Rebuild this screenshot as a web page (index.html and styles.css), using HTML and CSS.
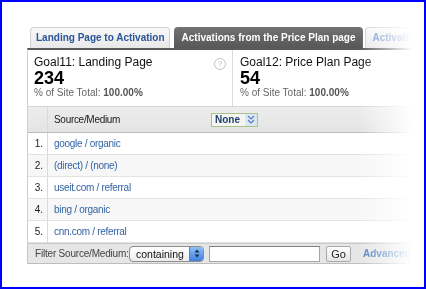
FILE: index.html
```html
<!DOCTYPE html>
<html>
<head>
<meta charset="utf-8">
<link rel="stylesheet" href="styles.css">
</head>
<body>
<div class="frame">
  <div class="widget">
    <div class="tabs">
      <div class="tab tab-light tab-first">Landing Page to Activation</div>
      <div class="tab tab-active">Activations from the Price Plan page</div>
      <div class="tab tab-light tab-third">Activations</div>
    </div>
    <div class="panel">
      <div class="goals">
        <div class="goal goal-first">
          <div class="goal-text">
            <div class="goal-name">Goal11: Landing Page</div>
            <div class="goal-value">234</div>
            <div class="goal-total">% of Site Total: <b>100.00%</b></div>
          </div>
          <span class="help">?</span>
        </div>
        <div class="goal goal-second">
          <div class="goal-text">
            <div class="goal-name">Goal12: Price Plan Page</div>
            <div class="goal-value">54</div>
            <div class="goal-total">% of Site Total: <b>100.00%</b></div>
          </div>
        </div>
      </div>
      <div class="table">
        <div class="row head">
          <div class="num"></div>
          <div class="cell dim">
            <span>Source/Medium</span>
            <span class="secondary">
              <span class="secondary-label">None</span>
              <span class="secondary-btn">
                <svg width="8" height="9" viewBox="0 0 8 9"><polyline points="1,1 4,4 7,1" fill="none" stroke="#4f7fc4" stroke-width="1.2"/><polyline points="1,5 4,8 7,5" fill="none" stroke="#4f7fc4" stroke-width="1.2"/></svg>
              </span>
            </span>
          </div>
        </div>
        <div class="row"><div class="num">1.</div><div class="cell"><span class="link">google / organic</span></div></div>
        <div class="row alt"><div class="num">2.</div><div class="cell"><span class="link">(direct) / (none)</span></div></div>
        <div class="row"><div class="num">3.</div><div class="cell"><span class="link">useit.com / referral</span></div></div>
        <div class="row alt"><div class="num">4.</div><div class="cell"><span class="link">bing / organic</span></div></div>
        <div class="row"><div class="num">5.</div><div class="cell"><span class="link">cnn.com / referral</span></div></div>
      </div>
      <div class="filter">
        <span class="filter-label">Filter Source/Medium:</span>
        <span class="select">
          <span class="select-text">containing</span>
          <span class="stepper">
            <svg width="6" height="9" viewBox="0 0 6 9"><polygon points="3,0.5 5.5,3.5 0.5,3.5" fill="#1c2c48"/><polygon points="3,8.5 5.5,5.5 0.5,5.5" fill="#1c2c48"/></svg>
          </span>
        </span>
        <span class="input"></span>
        <span class="go">Go</span>
        <span class="advanced">Advanced Filter</span>
      </div>
    </div>
  </div>
</div>
</body>
</html>
```

FILE: styles.css
```css
html, body {
  margin: 0;
  padding: 0;
  background: #fff;
}

.frame {
  width: 426px;
  height: 289px;
  box-sizing: border-box;
  border: 2px solid #0000ff;
  padding: 25px 0 0 25px;
  overflow: hidden;
  background: #fff;
  font-family: "Liberation Sans", Arial, sans-serif;
}

.widget {
  width: 420px;
  -webkit-mask-image: linear-gradient(to right, #000 0, #000 333px, rgba(0,0,0,0) 385px);
  mask-image: linear-gradient(to right, #000 0, #000 333px, rgba(0,0,0,0) 385px);
}

.tabs {
  display: flex;
  align-items: flex-end;
  margin-left: 3px;
  height: 21px;
}

.tab {
  height: 21px;
  box-sizing: border-box;
  line-height: 20px;
  padding: 0 6px;
  font-size: 10px;
  font-weight: bold;
  border-radius: 4px 4px 0 0;
  white-space: nowrap;
}

.tab-light {
  background: linear-gradient(#f8f8f8, #e8e8e8);
  border: 1px solid #d2d2d2;
  border-bottom: none;
  color: #2b5597;
}

.tab-first {
  padding: 0 4px 0 5px;
}

.tab-active {
  background: linear-gradient(#727272, #575757);
  color: #fff;
  margin-left: 4px;
  padding: 0 8px;
  line-height: 21px;
}

.tab-third {
  margin-left: 2px;
  color: #6a93cc;
}

.panel {
  border-top: 2px solid #5b5b5b;
  border-left: 1px solid #cfcfcf;
}

.goals {
  display: flex;
  height: 56px;
}

.goal {
  box-sizing: border-box;
  padding-top: 6px;
  color: #111;
}

.goal-first {
  width: 205px;
  border-right: 1px solid #dcdcdc;
  padding-left: 6px;
  padding-right: 6px;
  display: flex;
  justify-content: space-between;
  align-items: flex-start;
}

.goal-second {
  flex: 1;
  padding-left: 7px;
}

.goal-name {
  font-size: 12px;
  line-height: 13px;
}

.goal-value {
  font-size: 18px;
  font-weight: bold;
  line-height: 18px;
  color: #000;
}

.goal-total {
  font-size: 10px;
  line-height: 12px;
  color: #666;
}

.goal-total b {
  color: #555;
}

.help {
  width: 10px;
  height: 10px;
  border: 1px solid #c4c4c4;
  border-radius: 50%;
  font-size: 8px;
  line-height: 10px;
  text-align: center;
  color: #b0b0b0;
  margin-top: 2px;
}

.row {
  display: flex;
  height: 22px;
  box-sizing: border-box;
  border-bottom: 1px solid #e3e3e3;
  font-size: 10px;
  letter-spacing: -0.3px;
  align-items: stretch;
}

.row.alt {
  background: #f7f7f7;
}

.row.head {
  height: 27px;
  border-top: 1px solid #d6d6d6;
  border-bottom: 1px solid #bcbcbc;
  background: linear-gradient(#ededed, #e4e4e4);
  color: #222;
}

.num {
  width: 20px;
  box-sizing: border-box;
  border-right: 1px solid #dadada;
  padding-right: 4px;
  text-align: right;
  color: #222;
  display: flex;
  align-items: center;
  justify-content: flex-end;
  letter-spacing: 0;
}

.cell {
  display: flex;
  align-items: center;
  padding-left: 6px;
}

.cell.dim {
  width: 217px;
  box-sizing: border-box;
  justify-content: space-between;
  padding-right: 7px;
}

.link {
  color: #3464a6;
}

.secondary {
  display: flex;
  height: 14px;
  width: 47px;
  box-sizing: border-box;
  border: 1px solid #a9c18c;
  background: #f4f7f1;
  letter-spacing: 0;
}

.secondary-label {
  flex: 1;
  font-weight: bold;
  font-size: 10px;
  line-height: 12px;
  padding-left: 3px;
  color: #223f6e;
}

.secondary-btn {
  width: 12px;
  background: #dbe7f4;
  display: flex;
  align-items: center;
  justify-content: center;
}

.filter {
  display: flex;
  align-items: center;
  height: 21px;
  box-sizing: border-box;
  border-top: 1px solid #cacaca;
  border-bottom: 1px solid #bdbdbd;
  background: #e6e6e6;
  padding-left: 7px;
  box-shadow: 0 1px 2px rgba(0,0,0,0.12);
  font-size: 10px;
}

.filter-label {
  width: 94px;
  color: #444;
  white-space: nowrap;
  letter-spacing: -0.2px;
}

.select {
  display: flex;
  width: 75px;
  height: 16px;
  box-sizing: border-box;
  border: 1px solid #8c8c8c;
  border-radius: 4px;
  background: linear-gradient(#ffffff, #ededed);
  overflow: hidden;
}

.select-text {
  flex: 1;
  font-size: 10.5px;
  line-height: 14px;
  padding-left: 6px;
  color: #111;
}

.stepper {
  width: 13px;
  background: linear-gradient(#8fc0f5, #3d80de);
  border-left: 1px solid #5a7fb0;
  display: flex;
  align-items: center;
  justify-content: center;
}

.input {
  width: 111px;
  height: 16px;
  box-sizing: border-box;
  margin-left: 5px;
  border: 1px solid #a5a5a5;
  border-top-color: #7f7f7f;
  background: #fff;
}

.go {
  width: 25px;
  height: 16px;
  box-sizing: border-box;
  margin-left: 6px;
  border: 1px solid #aaaaaa;
  border-radius: 2px;
  background: linear-gradient(#ffffff, #e4e4e4);
  text-align: center;
  line-height: 14px;
  font-size: 11px;
  color: #222;
}

.advanced {
  margin-left: 12px;
  color: #4a7cc0;
  font-weight: bold;
  white-space: nowrap;
}
```
